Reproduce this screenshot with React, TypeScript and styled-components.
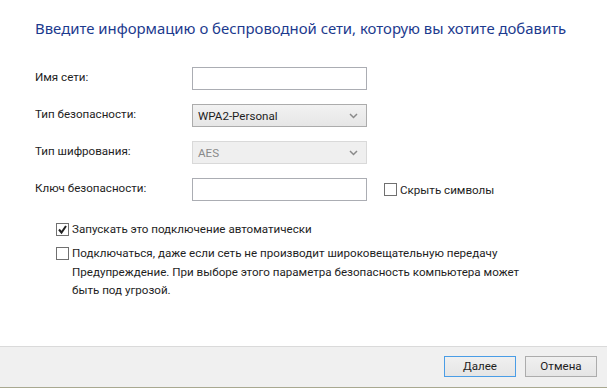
import React from "react";
import styled, { createGlobalStyle } from "styled-components";

const Global = createGlobalStyle`
  html, body { margin: 0; padding: 0; background: #ffffff; }
  body { font-family: Roboto, "Noto Sans", sans-serif; font-size: 11.6px; color: #1e1e1e; }
  * { box-sizing: border-box; }
`;

const Window = styled.div`
  width: 607px;
  height: 388px;
  display: flex;
  flex-direction: column;
  background: #ffffff;
`;

const Content = styled.div`
  flex: 1;
  padding: 18px 0 0 35px;
  display: flex;
  flex-direction: column;
`;

const Title = styled.h1`
  margin: 0;
  font-family: "Noto Sans", sans-serif;
  font-size: 14.9px;
  font-weight: 400;
  line-height: 20px;
  color: #1c3a8e;
`;

const Form = styled.div`
  margin-top: 29px;
  display: grid;
  grid-template-columns: 157px 175px auto;
  grid-auto-rows: 23px;
  row-gap: 14px;
  align-items: center;
`;

const Label = styled.div`
  line-height: 16px;
  margin-top: -4px;
  align-self: center;
`;

const TextBox = styled.div`
  height: 23px;
  border: 1px solid #abadb3;
  background: #ffffff;
`;

const Combo = styled.div<{ $disabled?: boolean }>`
  height: 23px;
  display: flex;
  align-items: center;
  justify-content: space-between;
  padding: 0 8px 0 5px;
  border: 1px solid ${(p) => (p.$disabled ? "#d9d9d9" : "#acacac")};
  background: ${(p) =>
    p.$disabled ? "#efefef" : "linear-gradient(#f2f2f2, #e6e6e6)"};
  color: ${(p) => (p.$disabled ? "#8a8a8a" : "#1e1e1e")};
`;

const Check = styled.label`
  display: flex;
  align-items: center;
  gap: 3px;
  line-height: 16px;
`;

const Box = styled.span`
  width: 13px;
  height: 13px;
  border: 1px solid #707070;
  background: #ffffff;
  display: flex;
  align-items: center;
  justify-content: center;
`;

const HideCheck = styled(Check)`
  margin-left: 17px;
`;

const Options = styled.div`
  margin-top: 20px;
  padding-left: 21px;
  display: flex;
  flex-direction: column;
  gap: 8px;
`;

const Warning = styled.p`
  margin: 2px 0 0 16px;
  width: 470px;
  line-height: 18px;
`;

const Footer = styled.div`
  height: 42px;
  border-top: 1px solid #dadada;
  border-bottom: 1px solid #a8a890;
  background: #f0f0f0;
  display: flex;
  justify-content: flex-end;
  align-items: center;
  gap: 9px;
  padding: 0 10px 2px 0;
`;

const Button = styled.div<{ $default?: boolean }>`
  width: 72px;
  height: 21px;
  display: flex;
  align-items: center;
  justify-content: center;
  border: 1px solid ${(p) => (p.$default ? "#4a9de6" : "#acacac")};
  background: linear-gradient(#f0f0f0, #e5e5e5);
  color: #1e1e1e;
`;

const Chevron = () => (
  <svg width="9" height="6" viewBox="0 0 9 6">
    <path d="M1 1 L4.5 4.5 L8 1" fill="none" stroke="#8a8a8a" strokeWidth="1.5" />
  </svg>
);

const Tick = () => (
  <svg width="11" height="11" viewBox="0 0 11 11">
    <path d="M2 5.5 L4.5 8.5 L9 2" fill="none" stroke="#222" strokeWidth="2" />
  </svg>
);

export default function App() {
  return (
    <Window>
      <Global />
      <Content>
        <Title>Введите информацию о беспроводной сети, которую вы хотите добавить</Title>
        <Form>
          <Label>Имя сети:</Label>
          <TextBox />
          <span />
          <Label>Тип безопасности:</Label>
          <Combo>
            <span>WPA2-Personal</span>
            <Chevron />
          </Combo>
          <span />
          <Label>Тип шифрования:</Label>
          <Combo $disabled>
            <span>AES</span>
            <Chevron />
          </Combo>
          <span />
          <Label>Ключ безопасности:</Label>
          <TextBox />
          <HideCheck>
            <Box />
            Скрыть символы
          </HideCheck>
        </Form>
        <Options>
          <Check>
            <Box>
              <Tick />
            </Box>
            Запускать это подключение автоматически
          </Check>
          <div>
            <Check>
              <Box />
              Подключаться, даже если сеть не производит широковещательную передачу
            </Check>
            <Warning>
              Предупреждение. При выборе этого параметра безопасность компьютера может быть под угрозой.
            </Warning>
          </div>
        </Options>
      </Content>
      <Footer>
        <Button $default>Далее</Button>
        <Button>Отмена</Button>
      </Footer>
    </Window>
  );
}
